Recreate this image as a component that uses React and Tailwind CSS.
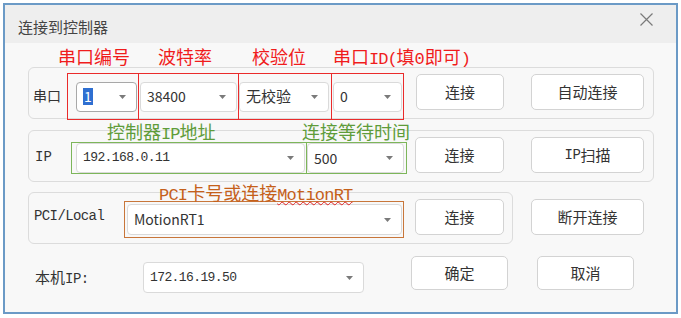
import React from "react";

const CJK = "font-['Noto_Sans_CJK_SC','Noto_Sans',sans-serif]";
const MONO = "font-['Liberation_Mono','Noto_Sans_CJK_SC',monospace]";

function Arrow() {
  return (
    <svg width="7" height="4" viewBox="0 0 7 4" className="shrink-0">
      <path d="M0 0 L7 0 L3.5 4 Z" fill="#7a7a7a" />
    </svg>
  );
}

function Combo({ cls, textCls = "", children }) {
  return (
    <div
      className={`flex items-center justify-between bg-white border border-solid rounded-[4px] pl-[6px] pr-[10px] ${cls}`}
    >
      <span className={`text-[#333] whitespace-nowrap ${textCls}`}>{children}</span>
      <Arrow />
    </div>
  );
}

function Btn({ cls, children }) {
  return (
    <div
      className={`flex items-center justify-center bg-white border border-solid border-[#d3d3d3] rounded-[5px] text-[15px] text-[#333] ${CJK} ${cls}`}
    >
      {children}
    </div>
  );
}

export default function App() {
  return (
    <div className="w-[681px] h-[318px] bg-white pt-[3px] pl-[3px]">
      <div className={`w-[675px] h-[311px] border-2 border-solid border-[#6b9ac6] bg-[#f8f8f8] flex flex-col ${CJK}`}>
        {/* title bar */}
        <div className="h-[38px] bg-[#eeeeee] flex justify-between">
          <div className="pl-[13px] pt-[12px] text-[15px] leading-[20px] text-[#444]">连接到控制器</div>
          <svg width="13" height="13" viewBox="0 0 13 13" className="mt-[8px] mr-[23px]">
            <path d="M0.5 0.5 L12.5 12.5 M12.5 0.5 L0.5 12.5" stroke="#7a7a7a" strokeWidth="1.2" />
          </svg>
        </div>

        {/* body */}
        <div className="relative flex-1 flex flex-col">
          {/* group 1 */}
          <div className="mt-[24px] ml-[23px] w-[626px] h-[52px] border border-solid border-[#dcdcdc] rounded-[6px] flex items-start">
            <div className="ml-[4px] mt-[17px] w-[34px] text-[14px] leading-[20px] text-[#333]">串口</div>
            <div className="mt-[5px] h-[47px] w-[337px] border border-solid border-[#ea2b2b] flex">
              <div className="w-[70px] h-full flex items-center">
                <Combo cls="ml-[8px] w-[61px] h-[30px] border-[#a8a8a8]" textCls="text-[14px]">
                  <span className="bg-[#2f6fd1] text-white px-[1px] text-[14px] leading-[17px] inline-block">1</span>
                </Combo>
              </div>
              <div className="w-px h-full bg-[#ea2b2b]" />
              <div className="w-[99px] h-full flex items-center">
                <Combo cls="ml-[1px] w-[97px] h-[30px] border-[#dadada]" textCls="text-[14px]">38400</Combo>
              </div>
              <div className="w-px h-full bg-[#ea2b2b]" />
              <div className="w-[92px] h-full flex items-center">
                <Combo cls="ml-[0px] w-[90px] h-[30px] border-[#dadada]" textCls="text-[15px]">无校验</Combo>
              </div>
              <div className="w-px h-full bg-[#ea2b2b]" />
              <div className="w-[71px] h-full flex items-center">
                <Combo cls="ml-[1px] w-[69px] h-[30px] border-[#dadada]" textCls="text-[14px]">0</Combo>
              </div>
            </div>
            <Btn cls="ml-[12px] mt-[6px] w-[88px] h-[36px]">连接</Btn>
            <Btn cls="ml-[27px] mt-[6px] w-[113px] h-[36px]">自动连接</Btn>
          </div>

          {/* group 2 */}
          <div className="mt-[11px] ml-[23px] w-[626px] h-[52px] border border-solid border-[#dcdcdc] rounded-[6px] flex items-start">
            <div className={`ml-[6px] mt-[16px] w-[36px] text-[14px] leading-[20px] text-[#333] ${MONO}`}>IP</div>
            <div className="mt-[11px] h-[32px] w-[336px] border border-solid border-[#7db65a] flex">
              <div className="w-[234px] h-full">
                <Combo cls="ml-[4px] w-[229px] h-full border-[#dadada]" textCls={`text-[13px] tracking-[-0.6px] ${MONO}`}>192.168.0.11</Combo>
              </div>
              <div className="w-px h-full bg-[#7db65a]" />
              <div className="w-[99px] h-full">
                <Combo cls="ml-[0px] w-[97px] h-full border-[#dadada]" textCls="text-[14px]">500</Combo>
              </div>
            </div>
            <Btn cls="ml-[8px] mt-[6px] w-[89px] h-[36px]">连接</Btn>
            <Btn cls="ml-[27px] mt-[6px] w-[113px] h-[36px]">
              <span className={`${MONO} text-[14px] tracking-[-0.5px]`}>IP</span>扫描
            </Btn>
          </div>

          {/* row 3 */}
          <div className="mt-[10px] ml-[23px] flex items-start">
            <div className="w-[485px] h-[52px] border border-solid border-[#dcdcdc] rounded-[6px] flex items-start">
              <div className={`ml-[5px] mt-[13px] w-[90px] text-[14px] tracking-[-0.6px] leading-[20px] text-[#333] ${MONO}`}>PCI/Local</div>
              <div className="mt-[8px] h-[37px] w-[280px] border border-solid border-[#c8763a] flex items-center">
                <Combo cls="ml-[2px] w-[275px] h-[31px] border-[#dadada]" textCls="text-[14px]">MotionRT1</Combo>
              </div>
              <Btn cls="ml-[11px] mt-[6px] w-[89px] h-[36px]">连接</Btn>
            </div>
            <Btn cls="ml-[18px] mt-[7px] w-[113px] h-[36px]">断开连接</Btn>
          </div>

          {/* bottom row */}
          <div className="flex items-start">
            <div className="ml-[30px] mt-[23px] w-[108px] text-[15px] leading-[20px] text-[#333]">
              本机<span className={`${MONO} text-[14px] tracking-[-0.5px]`}>IP:</span>
            </div>
            <Combo cls="mt-[18px] w-[221px] h-[31px] border-[#dadada]" textCls={`text-[13px] tracking-[-0.6px] ${MONO}`}>172.16.19.50</Combo>
            <Btn cls="ml-[47px] mt-[12px] w-[97px] h-[34px]">确定</Btn>
            <Btn cls="ml-[29px] mt-[12px] w-[97px] h-[34px]">取消</Btn>
          </div>

          {/* annotations */}
          <div className="absolute left-[53px] top-[4px] text-[18px] leading-[18px] text-[#f01c1c] whitespace-nowrap">串口编号</div>
          <div className="absolute left-[153px] top-[4px] text-[18px] leading-[18px] text-[#f01c1c] whitespace-nowrap">波特率</div>
          <div className="absolute left-[247px] top-[4px] text-[18px] leading-[18px] text-[#f01c1c] whitespace-nowrap">校验位</div>
          <div className="absolute left-[328px] top-[4px] text-[18px] leading-[18px] text-[#f01c1c] whitespace-nowrap">
            串口<span className={`${MONO} text-[17px] tracking-[-1px]`}>ID(</span>填<span className={`${MONO} text-[17px]`}>0</span>即可<span className={`${MONO} text-[17px]`}>)</span>
          </div>
          <div className="absolute left-[102px] top-[79px] text-[18px] leading-[19px] text-[#5f9c3a] whitespace-nowrap">
            控制器<span className={`${MONO} text-[17px] tracking-[-1px]`}>IP</span>地址
          </div>
          <div className="absolute left-[297px] top-[79px] text-[18px] leading-[19px] text-[#5f9c3a] whitespace-nowrap">连接等待时间</div>
          <div className="absolute left-[154px] top-[140px] text-[18px] leading-[19px] text-[#c5601a] whitespace-nowrap">
            <span className={`${MONO} text-[17px] tracking-[-0.8px]`}>PCI</span>卡号或连接
            <span className={`${MONO} text-[17px] tracking-[-0.8px] underline decoration-wavy decoration-[#e02020] decoration-1`}>MotionRT</span>
          </div>
        </div>
      </div>
    </div>
  );
}
